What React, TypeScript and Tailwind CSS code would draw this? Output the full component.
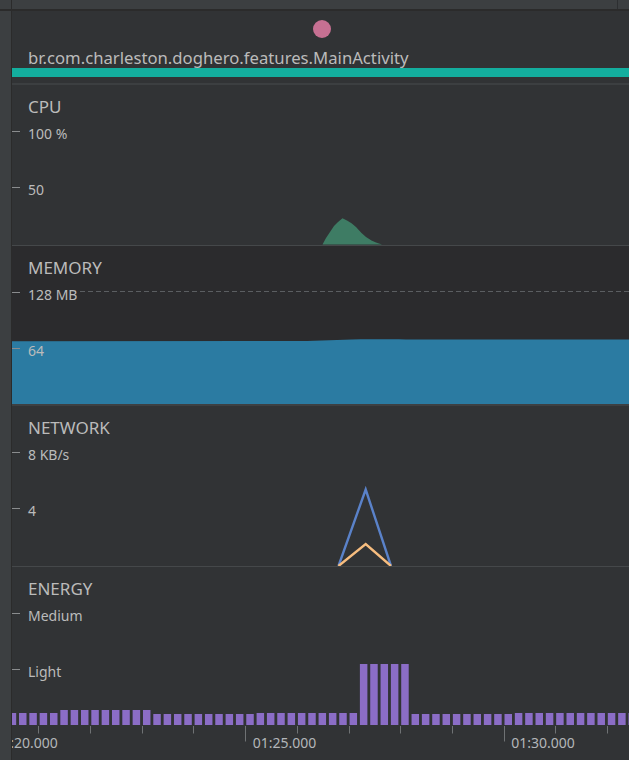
import { type ReactNode } from 'react';

const FONT = "font-['Noto_Sans',sans-serif]";

const BAR_PITCH = 10.33;
const TICK_PITCH = 51.7;

const barHeight = (k: number) => {
  if (k >= 33 && k <= 37) return 61;
  if (k >= 4 && k <= 12) return 15;
  if ((k >= 13 && k <= 22) || (k >= 38 && k <= 47)) return 11;
  return 12;
};

const BARS = Array.from({ length: 61 }, (_, i) => i - 1);
const TICKS = Array.from({ length: 13 }, (_, i) => i - 1);

const TIME_LABELS = [
  { i: -1, text: '01:20.000' },
  { i: 4, text: '01:25.000' },
  { i: 9, text: '01:30.000' },
];

const tickX = (i: number) => 26.3 + TICK_PITCH * i;

interface AxisRowProps {
  label: string;
  className?: string;
}

const AxisRow = ({ label, className }: AxisRowProps) => (
  <div className={`flex items-start ${className ?? ''}`}>
    <div className="mt-[5px] h-px w-2 bg-[#8a8c8e]" />
    <span className="ml-2 text-[14px] leading-[16px] text-[#bbbbbb]">{label}</span>
  </div>
);

interface TrackProps {
  title: string;
  top: string;
  mid: string;
  chart?: ReactNode;
  className?: string;
  padTop?: string;
}

const Track = ({ title, top, mid, chart, className, padTop = 'pt-[12px]' }: TrackProps) => (
  <div className={`relative shrink-0 ${className ?? ''}`}>
    {chart}
    <div className={`relative flex flex-col ${padTop}`}>
      <div className="pl-4 text-[17px] leading-[20px] text-[#bbbbbb]">{title}</div>
      <AxisRow label={top} className="mt-[9px]" />
      <AxisRow label={mid} className="mt-[40px]" />
    </div>
  </div>
);

const CpuChart = () => (
  <svg className="absolute inset-0" width="617" height="160" viewBox="0 0 617 160">
    <path
      d="M310.5 159.5 L314 153 L318 147 L322 141 L326 137 L330.5 133.3 L335 135.5 L339.5 138.3 L344 142 L349.5 148 L354 152 L359.5 155.6 L364 157.5 L370 159.5 Z"
      fill="#3e7c64"
    />
  </svg>
);

const MemoryChart = () => (
  <svg className="absolute inset-0" width="617" height="158" viewBox="0 0 617 158">
    <line x1="68" y1="45.5" x2="617" y2="45.5" stroke="#5b5e61" strokeWidth="1" strokeDasharray="5 3" />
    <path
      d="M0 95.2 L280 95 C300 95 320 94.2 340 93.4 C360 93 380 93.5 420 93.4 L617 93.4 L617 158 L0 158 Z"
      fill="#2b7ba2"
    />
  </svg>
);

const NetworkChart = () => (
  <svg className="absolute inset-0" width="617" height="160" viewBox="0 0 617 160">
    <polyline points="326.5,160 353.7,83.5 379,160" fill="none" stroke="#5a82c9" strokeWidth="2.4" />
    <polyline points="326.5,160 353.7,138 379,160" fill="none" stroke="#f7bd7f" strokeWidth="2.4" />
  </svg>
);

const EnergyChart = () => (
  <>
    <svg className="absolute inset-0" width="617" height="193" viewBox="0 0 617 193">
      {BARS.map(k => {
        const h = barHeight(k);
        return (
          <rect key={k} x={7 + BAR_PITCH * k} y={158 - h} width="7.5" height={h} fill="#8b6dc6" />
        );
      })}
      {TICKS.map(i => {
        const x = Math.round(tickX(i)) + 0.5;
        const major = (i + 1) % 5 === 0;
        return (
          <line key={i} x1={x} y1="159" x2={x} y2={major ? 174.5 : 166.5} stroke="#6f7274" strokeWidth="1" />
        );
      })}
    </svg>
    {TIME_LABELS.map(l => (
      <span
        key={l.text}
        className="absolute top-[168px] whitespace-nowrap text-[14px] leading-[16px] text-[#b3b6b9]"
        style={{ left: tickX(l.i) + 7.6 }}
      >
        {l.text}
      </span>
    ))}
  </>
);

export default function App() {
  return (
    <div className={`flex h-[760px] w-[629px] flex-col overflow-hidden bg-[#313335] ${FONT}`}>
      <div className="flex h-[9px] shrink-0 bg-[#3c3f41]">
        <div className="w-[11px]" />
        <div className="w-px bg-[#2b2b2b]" />
        <div className="flex-1" />
        <div className="mr-[11px] w-px bg-[#2d2f31]" />
      </div>
      <div className="h-[2px] shrink-0 bg-[#2b2b2b]" />

      <div className="flex min-h-0 flex-1">
        <div className="w-[11px] shrink-0 bg-[#3c3f41]" />
        <div className="w-px shrink-0 bg-[#2b2b2b]" />

        <div className="relative flex min-w-0 flex-1 flex-col overflow-hidden">
          <div className="flex h-[74px] shrink-0 flex-col border-b-2 border-[#3c3f41]">
            <div className="ml-[301px] mt-[9px] h-[18px] w-[18px] rounded-full bg-[#c67092]" />
            <div className="mt-[10px] h-[20px] whitespace-nowrap pl-4 text-[16.7px] leading-[20px] text-[#bbbbbb]">
              br.com.charleston.doghero.features.MainActivity
            </div>
            <div className="h-[9px] bg-[#13ae9e]" />
          </div>

          <Track
            title="CPU"
            top="100 %"
            mid="50"
            chart={<CpuChart />}
            className="h-[161px] border-b border-[#45484a]"
          />
          <Track
            title="MEMORY"
            top="128 MB"
            mid="64"
            chart={<MemoryChart />}
            padTop="pt-[12px]"
            className="h-[160px] border-b-2 border-[#3d4042] bg-[#2b2b2d]"
          />
          <Track
            title="NETWORK"
            top="8 KB/s"
            mid="4"
            chart={<NetworkChart />}
            className="h-[161px] border-b border-[#45484a]"
          />
          <Track
            title="ENERGY"
            top="Medium"
            mid="Light"
            chart={<EnergyChart />}
            padTop="pt-[12px]"
            className="flex-1"
          />
        </div>
      </div>
    </div>
  );
}
